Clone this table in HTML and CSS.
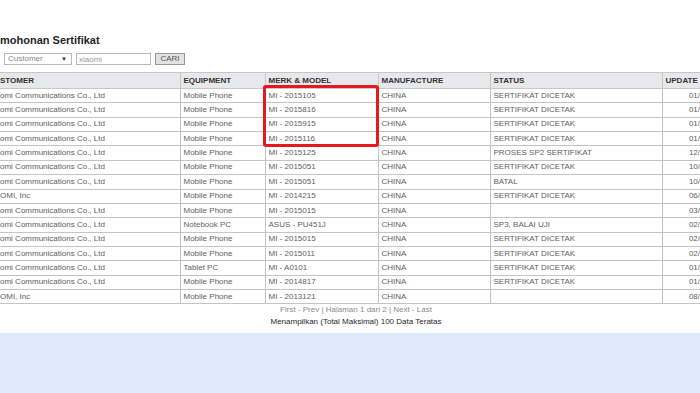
FILE: index.html
```html
<!DOCTYPE html>
<html lang="id">
<head>
<meta charset="utf-8">
<title>Permohonan Sertifikat</title>
<link rel="stylesheet" href="styles.css">
</head>
<body>
<div class="page">
  <main class="content">
    <h1 class="title">mohonan Sertifikat</h1>
    <form class="search">
      <label class="select-box">
        <select><option>Customer</option></select>
        <span class="arrow">▼</span>
      </label>
      <input class="text-input" type="text" value="xiaomi">
      <button class="btn" type="button">CARI</button>
    </form>
    <div class="table-wrap">
      <table class="grid">
        <colgroup>
          <col class="c-cust"><col class="c-equip"><col class="c-merk"><col class="c-manu"><col class="c-status"><col class="c-upd">
        </colgroup>
        <thead>
          <tr><th>STOMER</th><th>EQUIPMENT</th><th>MERK &amp; MODEL</th><th>MANUFACTURE</th><th>STATUS</th><th>UPDATE</th></tr>
        </thead>
        <tbody>
          <tr><td>omi Communications Co., Ltd</td><td>Mobile Phone</td><td>MI - 2015105</td><td>CHINA</td><td>SERTIFIKAT DICETAK</td><td class="upd">01/</td></tr>
          <tr><td>omi Communications Co., Ltd</td><td>Mobile Phone</td><td>MI - 2015816</td><td>CHINA</td><td>SERTIFIKAT DICETAK</td><td class="upd">01/</td></tr>
          <tr><td>omi Communications Co., Ltd</td><td>Mobile Phone</td><td>MI - 2015915</td><td>CHINA</td><td>SERTIFIKAT DICETAK</td><td class="upd">01/</td></tr>
          <tr><td>omi Communications Co., Ltd</td><td>Mobile Phone</td><td>MI - 2015116</td><td>CHINA</td><td>SERTIFIKAT DICETAK</td><td class="upd">01/</td></tr>
          <tr><td>omi Communications Co., Ltd</td><td>Mobile Phone</td><td>MI - 2015125</td><td>CHINA</td><td>PROSES SP2 SERTIFIKAT</td><td class="upd">12/</td></tr>
          <tr><td>omi Communications Co., Ltd</td><td>Mobile Phone</td><td>MI - 2015051</td><td>CHINA</td><td>SERTIFIKAT DICETAK</td><td class="upd">10/</td></tr>
          <tr><td>omi Communications Co., Ltd</td><td>Mobile Phone</td><td>MI - 2015051</td><td>CHINA</td><td>BATAL</td><td class="upd">10/</td></tr>
          <tr><td>OMI, Inc</td><td>Mobile Phone</td><td>MI - 2014215</td><td>CHINA</td><td>SERTIFIKAT DICETAK</td><td class="upd">06/</td></tr>
          <tr><td>omi Communications Co., Ltd</td><td>Mobile Phone</td><td>MI - 2015015</td><td>CHINA</td><td></td><td class="upd">03/</td></tr>
          <tr><td>omi Communications Co., Ltd</td><td>Notebook PC</td><td>ASUS - PU451J</td><td>CHINA</td><td>SP3, BALAI UJI</td><td class="upd">02/</td></tr>
          <tr><td>omi Communications Co., Ltd</td><td>Mobile Phone</td><td>MI - 2015015</td><td>CHINA</td><td>SERTIFIKAT DICETAK</td><td class="upd">02/</td></tr>
          <tr><td>omi Communications Co., Ltd</td><td>Mobile Phone</td><td>MI - 2015011</td><td>CHINA</td><td>SERTIFIKAT DICETAK</td><td class="upd">02/</td></tr>
          <tr><td>omi Communications Co., Ltd</td><td>Tablet PC</td><td>MI - A0101</td><td>CHINA</td><td>SERTIFIKAT DICETAK</td><td class="upd">01/</td></tr>
          <tr><td>omi Communications Co., Ltd</td><td>Mobile Phone</td><td>MI - 2014817</td><td>CHINA</td><td>SERTIFIKAT DICETAK</td><td class="upd">01/</td></tr>
          <tr><td>OMI, Inc</td><td>Mobile Phone</td><td>MI - 2013121</td><td>CHINA</td><td></td><td class="upd">08/</td></tr>
        </tbody>
      </table>
      <div class="highlight" aria-hidden="true"></div>
    </div>
    <div class="pager">
      <p class="pager-links">First - Prev | Halaman 1 dari 2 | Next - Last</p>
      <p class="pager-note">Menampilkan (Total Maksimal) 100 Data Teratas</p>
    </div>
  </main>
  <footer class="band"></footer>
</div>
</body>
</html>
```

FILE: styles.css
```css
html, body {
  margin: 0;
  padding: 0;
  background: #ffffff;
  overflow: hidden;
}

body {
  width: 700px;
  height: 393px;
  font-family: "Liberation Sans", Arial, sans-serif;
  color: #555;
}

.page {
  display: flex;
  flex-direction: column;
  height: 393px;
}

.content {
  height: 333px;
  padding-top: 33px;
  box-sizing: border-box;
}

.title {
  margin: 0;
  font-size: 11px;
  line-height: 14px;
  font-weight: bold;
  color: #262626;
}

.search {
  display: flex;
  align-items: center;
  gap: 4px;
  margin: 6px 0 0 4px;
  height: 12px;
}

.select-box {
  display: flex;
  align-items: center;
  width: 68px;
  height: 12px;
  box-sizing: border-box;
  border: 1px solid #b9b9b9;
  background: #fff;
}

.select-box select {
  appearance: none;
  -webkit-appearance: none;
  border: 0;
  background: transparent;
  font-family: "Liberation Sans", Arial, sans-serif;
  font-size: 8px;
  color: #888;
  padding: 0 0 0 3px;
  margin: 0;
  height: 10px;
  line-height: 10px;
  flex: 1;
  outline: none;
}

.arrow {
  font-size: 6px;
  color: #333;
  margin-right: 4px;
  line-height: 10px;
}

.text-input {
  width: 75px;
  height: 12px;
  box-sizing: border-box;
  border: 1px solid #b9b9b9;
  padding: 0 2px;
  margin: 0;
  font-family: "Liberation Sans", Arial, sans-serif;
  font-size: 8px;
  color: #999;
}

.btn {
  width: 30px;
  height: 12px;
  box-sizing: border-box;
  border: 1px solid #999;
  background: #e2e2e2;
  padding: 0;
  margin: 0;
  font-family: "Liberation Sans", Arial, sans-serif;
  font-size: 8px;
  color: #555;
  line-height: 10px;
}

.table-wrap {
  position: relative;
  margin-top: 7px;
}

.grid {
  width: 700px;
  border-collapse: collapse;
  table-layout: fixed;
  font-size: 8px;
}

.c-cust { width: 180px; }
.c-equip { width: 85px; }
.c-merk { width: 113px; }
.c-manu { width: 112px; }
.c-status { width: 172px; }
.c-upd { width: 38px; }

.grid th,
.grid td {
  border: 1px solid #c4c4c4;
  padding: 0 3px;
  text-align: left;
  white-space: nowrap;
  overflow: hidden;
}

.grid th {
  height: 15px;
  background: #e5e9ea;
  color: #333;
  font-weight: bold;
  line-height: 14px;
  border-color: #c4c8c8;
}

.grid td {
  height: 13.36px;
  line-height: 12px;
  color: #616161;
}

.grid th:first-child,
.grid td:first-child {
  border-left: 0;
  padding-left: 0;
}

.grid th:last-child,
.grid td:last-child {
  border-right: 0;
}

.grid td.upd {
  text-align: right;
  padding-right: 0;
}

.highlight {
  position: absolute;
  left: 263px;
  top: 13px;
  width: 116px;
  height: 62px;
  box-sizing: border-box;
  border: 3px solid #e5191e;
  border-radius: 3px;
}

.pager {
  padding-left: 12px;
  text-align: center;
  margin-top: 0;
}

.pager p {
  margin: 0;
  font-size: 8px;
  line-height: 12px;
}

.pager-links {
  color: #8a8a8a;
}

.pager-note {
  color: #2a2a2a;
}

.band {
  flex: 1;
  background: #dee9f9;
}
```
